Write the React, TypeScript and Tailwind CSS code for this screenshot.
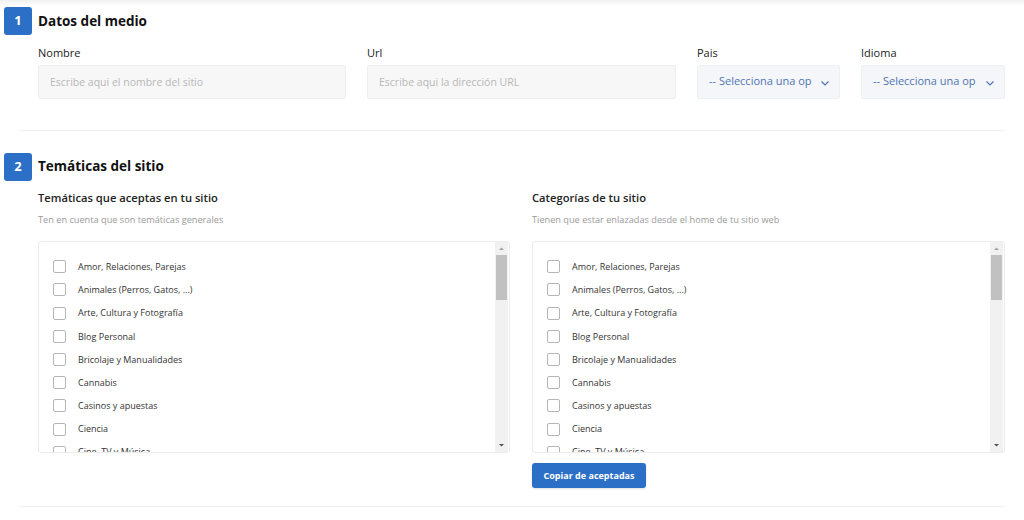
import { useState } from "react";

const temas = [
  "Amor, Relaciones, Parejas",
  "Animales (Perros, Gatos, ...)",
  "Arte, Cultura y Fotografía",
  "Blog Personal",
  "Bricolaje y Manualidades",
  "Cannabis",
  "Casinos y apuestas",
  "Ciencia",
  "Cine, TV y Música",
  "Deportes",
  "Economía y Finanzas",
  "Educación",
  "Empleo",
  "Empresas y Negocios",
  "Familia",
  "Gastronomía",
  "Hogar y Jardín",
  "Informática",
  "Internet",
  "Juegos y Videojuegos",
  "Legal",
  "Marketing",
  "Medicina y Salud",
  "Moda y Belleza",
  "Motor",
  "Naturaleza",
  "Noticias",
  "Ocio",
  "Política",
  "Religión",
  "SEO",
  "Sexo",
  "Tecnología",
  "Viajes",
  "Otros",
];

const font = { fontFamily: "'Open Sans', 'Liberation Sans', sans-serif" };

function SectionHeader({ n, title }: { n: number; title: string }) {
  return (
    <div className="flex items-center gap-[6px] pl-[4px]">
      <div className="w-[28px] h-[28px] rounded-[3px] bg-[#2b6fc7] text-white text-[13px] font-bold flex items-center justify-center">
        {n}
      </div>
      <h2 className="text-[13.5px] font-bold text-[#111]">{title}</h2>
    </div>
  );
}

function Select() {
  return (
    <div className="h-[34px] bg-[#f4f6f9] border border-[#eef0f3] rounded-[2px] flex items-center pl-[11px] pr-[9px] text-[11px] text-[#4f74b3]">
      <span className="flex-1 truncate">-- Selecciona una op</span>
      <svg width="10" height="10" viewBox="0 0 10 10" className="ml-1 mt-[2px]">
        <path d="M1.5 3.5 L5 7 L8.5 3.5" fill="none" stroke="#4f74b3" strokeWidth="1.2" />
      </svg>
    </div>
  );
}

function CheckList() {
  const [checked, setChecked] = useState<Record<string, boolean>>({});
  return (
    <div className="h-[212px] border border-[#ececec] rounded-[3px] bg-white flex overflow-hidden">
      <div className="flex-1 overflow-y-auto [scrollbar-width:none] pt-[13px] pl-[14px]">
        {temas.map((t) => (
          <label key={t} className="flex items-center h-[23.2px] cursor-pointer">
            <input
              type="checkbox"
              className="appearance-none w-[13px] h-[13px] border border-[#b5b5b5] rounded-[2px] bg-white checked:bg-[#2b6fc7]"
              checked={!!checked[t]}
              onChange={() => setChecked({ ...checked, [t]: !checked[t] })}
            />
            <span className="ml-[12px] text-[9px] text-[#333]">{t}</span>
          </label>
        ))}
      </div>
      {/* scrollbar */}
      <div className="w-[13px] bg-[#f1f1f1] flex flex-col items-center py-[1px] mr-[1px]">
        <svg width="13" height="12" viewBox="0 0 13 12">
          <path d="M4 7 L6.5 4.5 L9 7 Z" fill="#a3a3a3" />
        </svg>
        <div className="w-[11px] h-[45px] bg-[#c1c1c1]" />
        <div className="flex-1" />
        <svg width="13" height="12" viewBox="0 0 13 12">
          <path d="M4 5 L6.5 7.5 L9 5 Z" fill="#505050" />
        </svg>
      </div>
    </div>
  );
}

export default function App() {
  return (
    <div className="w-[1024px] h-[520px] bg-white overflow-hidden" style={font}>
      <div className="h-[6px] bg-gradient-to-b from-[#f1f1f1] to-white" />

      {/* Section 1 */}
      <div className="pt-[1px]">
        <SectionHeader n={1} title="Datos del medio" />
        <div className="grid grid-cols-[308px_309px_143px_144px] gap-x-[21px] pl-[38px] mt-[10px]">
          <div>
            <div className="text-[11px] text-[#222] mb-[3px]">Nombre</div>
            <input
              className="w-full h-[34px] bg-[#f7f7f7] border border-[#efefef] rounded-[2px] px-[11px] text-[10.5px] placeholder:text-[#b8b8b8] outline-none"
              placeholder="Escribe aqui el nombre del sitio"
            />
          </div>
          <div>
            <div className="text-[11px] text-[#222] mb-[3px]">Url</div>
            <input
              className="w-full h-[34px] bg-[#f7f7f7] border border-[#efefef] rounded-[2px] px-[11px] text-[10.5px] placeholder:text-[#b8b8b8] outline-none"
              placeholder="Escribe aqui la dirección URL"
            />
          </div>
          <div>
            <div className="text-[11px] text-[#222] mb-[3px]">Pais</div>
            <Select />
          </div>
          <div>
            <div className="text-[11px] text-[#222] mb-[3px]">Idioma</div>
            <Select />
          </div>
        </div>
      </div>

      <div className="mt-[31px] h-px bg-[#f0f0f0] mx-[20px]" />

      {/* Section 2 */}
      <div className="pt-[22px]">
        <SectionHeader n={2} title="Temáticas del sitio" />
        <div className="grid grid-cols-[472px_473px] gap-x-[22px] pl-[38px] mt-[9px]">
          <div>
            <div className="text-[11.2px] font-semibold text-[#222]">Temáticas que aceptas en tu sitio</div>
            <div className="text-[9.2px] text-[#9a9a9a] mt-[7px] mb-[14px]">Ten en cuenta que son temáticas generales</div>
            <CheckList />
          </div>
          <div>
            <div className="text-[11.2px] font-semibold text-[#222]">Categorías de tu sitio</div>
            <div className="text-[9.2px] text-[#9a9a9a] mt-[7px] mb-[14px]">Tienen que estar enlazadas desde el home de tu sitio web</div>
            <CheckList />
            <button className="mt-[10px] h-[25px] w-[114px] bg-[#2b6fc7] rounded-[3px] text-white text-[9px] font-bold shadow-sm">
              Copiar de aceptadas
            </button>
          </div>
        </div>
      </div>

      <div className="mt-[18px] h-px bg-[#f0f0f0] mx-[20px]" />
    </div>
  );
}
